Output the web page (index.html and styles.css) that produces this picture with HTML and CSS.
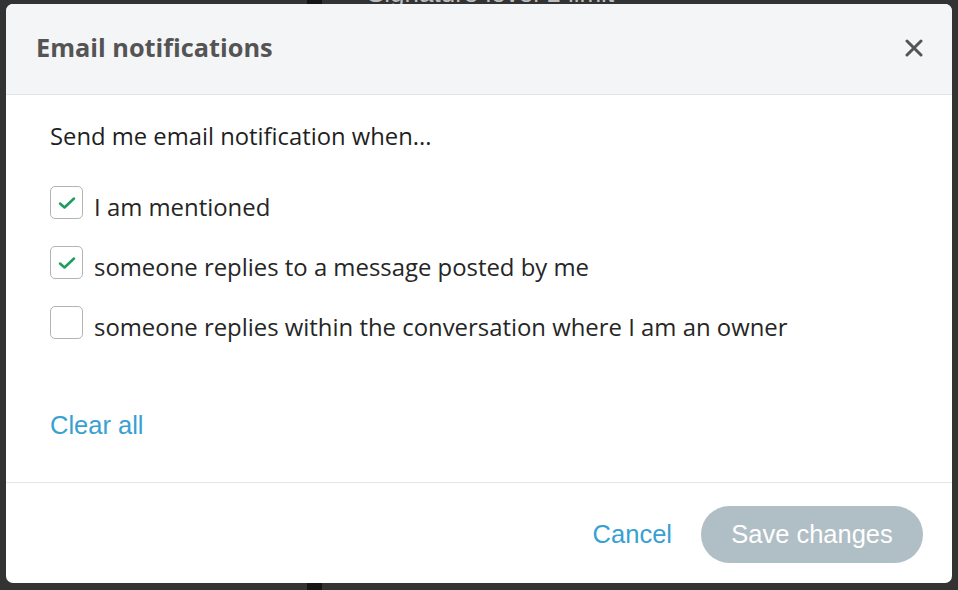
FILE: index.html
```html
<!DOCTYPE html>
<html lang="en">
<head>
<meta charset="utf-8">
<title>Email notifications</title>
<link rel="stylesheet" href="styles.css">
</head>
<body>
<div class="page">
  <div class="page-left"></div>
  <div class="page-rule"></div>
  <div class="page-main">
    <div class="page-title">Signature level 1 limit</div>
  </div>
</div>

<div class="overlay">
  <div class="modal" role="dialog" aria-labelledby="modal-title">
    <header class="modal-header">
      <h2 class="modal-title" id="modal-title">Email notifications</h2>
      <button class="close-btn" aria-label="Close">
        <svg width="18" height="18" viewBox="0 0 18 18" aria-hidden="true">
          <path d="M2 2 L16 16 M16 2 L2 16" stroke="#555" stroke-width="3" stroke-linecap="round" fill="none"/>
        </svg>
      </button>
    </header>

    <section class="modal-body">
      <p class="intro">Send me email notification when...</p>
      <ul class="options">
        <li class="option">
          <span class="box checked">
            <svg width="18" height="14" viewBox="0 0 18 14" aria-hidden="true"><path d="M2 7.5 L6.5 11.5 L16 2.5" stroke="#1f9d5f" stroke-width="2.5" fill="none" stroke-linecap="round" stroke-linejoin="round"/></svg>
          </span>
          <span class="label">I am mentioned</span>
        </li>
        <li class="option">
          <span class="box checked">
            <svg width="18" height="14" viewBox="0 0 18 14" aria-hidden="true"><path d="M2 7.5 L6.5 11.5 L16 2.5" stroke="#1f9d5f" stroke-width="2.5" fill="none" stroke-linecap="round" stroke-linejoin="round"/></svg>
          </span>
          <span class="label">someone replies to a message posted by me</span>
        </li>
        <li class="option">
          <span class="box"></span>
          <span class="label">someone replies within the conversation where I am an owner</span>
        </li>
      </ul>
      <a class="clear-all" href="#">Clear all</a>
    </section>

    <footer class="modal-footer">
      <button class="btn-link">Cancel</button>
      <button class="btn-save" disabled>Save changes</button>
    </footer>
  </div>
</div>
</body>
</html>
```

FILE: styles.css
```css
* { box-sizing: border-box; }

html, body {
  margin: 0;
  padding: 0;
  width: 958px;
  height: 590px;
  overflow: hidden;
  background: #333333;
}

body {
  position: relative;
  font-family: "Open Sans", "Liberation Sans", sans-serif;
}

/* background page (dimmed) */
.page {
  display: flex;
  height: 590px;
}
.page-left {
  width: 307px;
  background: #333333;
}
.page-rule {
  width: 15px;
  background: #151515;
}
.page-main {
  flex: 1;
  background: #333333;
}
.page-title {
  margin: -19px 0 0 45px;
  font-family: "Liberation Sans", sans-serif;
  font-size: 26px;
  line-height: 24px;
  color: #bdbdbd;
}

/* modal overlay */
.overlay {
  position: absolute;
  inset: 0;
  padding: 4px 6px 7px 6px;
  display: flex;
}

.modal {
  flex: 1;
  display: flex;
  flex-direction: column;
  background: #ffffff;
  border-radius: 7px;
  overflow: hidden;
}

.modal-header {
  height: 91px;
  flex: none;
  display: flex;
  align-items: center;
  justify-content: space-between;
  padding: 0 29px 0 30px;
  background: #f4f5f7;
  border-bottom: 1px solid #e2e4e7;
}

.modal-title {
  margin: 0 0 5px 0;
  font-family: "Open Sans", "Liberation Sans", sans-serif;
  font-weight: 700;
  font-size: 25.3px;
  color: #545454;
}

.close-btn {
  border: 0;
  background: transparent;
  padding: 0;
  width: 18px;
  height: 18px;
  margin-bottom: 2px;
  display: flex;
  align-items: center;
  justify-content: center;
  cursor: pointer;
}

.modal-body {
  flex: 1;
  padding: 26px 44px 0 44px;
  border-bottom: 1px solid #e6e6e6;
}

.intro {
  margin: 0 0 35px 0;
  font-size: 23.8px;
  line-height: 30px;
  color: #1f1f1f;
}

.options {
  list-style: none;
  margin: 0;
  padding: 0;
  display: flex;
  flex-direction: column;
  gap: 27px;
}

.option {
  display: flex;
  align-items: flex-start;
  gap: 11px;
  height: 33px;
}

.box {
  width: 33px;
  height: 33px;
  flex: none;
  border: 1px solid #b3b3b3;
  border-radius: 5px;
  background: #fff;
  display: flex;
  align-items: center;
  justify-content: center;
}

.label {
  font-size: 23.9px;
  line-height: 30px;
  color: #262626;
  margin-top: 6px;
}

.clear-all {
  display: inline-block;
  margin-top: 72px;
  font-family: "Liberation Sans", sans-serif;
  font-size: 25.5px;
  color: #39a0d2;
  text-decoration: none;
}

.modal-footer {
  height: 100px;
  flex: none;
  display: flex;
  align-items: center;
  justify-content: flex-end;
  gap: 29px;
  padding: 2px 29px 0 0;
}

.btn-link {
  border: 0;
  background: transparent;
  padding: 0;
  font-family: "Liberation Sans", sans-serif;
  font-size: 25.5px;
  color: #39a0d2;
  cursor: pointer;
}

.btn-save {
  width: 222px;
  height: 57px;
  border: 0;
  border-radius: 29px;
  background: #b0bec5;
  color: #ffffff;
  font-family: "Liberation Sans", sans-serif;
  font-size: 25.5px;
}
```
